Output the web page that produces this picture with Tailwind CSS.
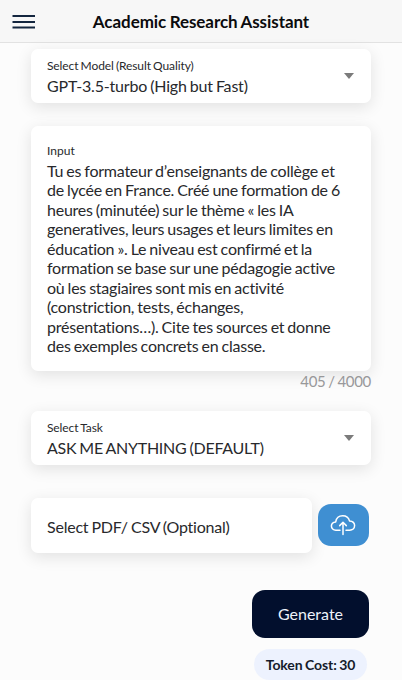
<!DOCTYPE html>
<html lang="en">
<head>
  <meta charset="UTF-8">
  <meta name="viewport" content="width=device-width, initial-scale=1.0">
  <title>Academic Research Assistant</title>
  <script src="https://cdn.jsdelivr.net/npm/@tailwindcss/browser@4"></script>
</head>
<body class="bg-[#fcfcfc] h-screen overflow-hidden font-[Lato,sans-serif] text-[#28292c] [font-variant-ligatures:none]">
  <header class="h-[43px] bg-[#f7f7f7] border-b border-[#e2e2e2] grid grid-cols-[80px_1fr_80px] items-center">
    <button type="button" aria-label="Menu" class="pl-[12px]">
      <svg class="block w-6 h-4" viewBox="0 0 24 16" fill="none" stroke="#14263f" stroke-width="2">
        <path d="M.5 3h22.5M.5 9h22.5M.5 14.600h22.5" />
      </svg>
    </button>
    <h1 class="text-center font-bold text-[17px] leading-5 pt-[2px] text-[#0b0b0d] whitespace-nowrap tracking-[-0.07px] [word-spacing:-0.6px]">Academic Research Assistant</h1>
  </header>
  <main class="pl-[31px] pr-[31px] pt-[6px] [word-spacing:-0.8px]">
    <div class="h-[54px] bg-white rounded-[7px] shadow-[0_4px_16px_rgba(0,0,0,0.11)] pl-4 pr-[17px] flex items-center justify-between">
      <div class="pt-px">
        <p class="text-[12px] leading-[18px] tracking-[-0.1px]">Select Model (Result Quality)</p>
        <p class="text-[16px] leading-[22px] tracking-[-0.19px]">GPT-3.5-turbo (High but Fast)</p>
      </div>
      <svg class="w-[10px] h-[6px]" viewBox="0 0 10 6" fill="#7b7b7b"><path d="M0 0h10L5 6z" /></svg>
    </div>
    <div class="mt-[23px] h-[245px] bg-white rounded-[7px] shadow-[0_4px_16px_rgba(0,0,0,0.11)] pl-4 pt-4">
      <p class="text-[12px] leading-[18px]">Input</p>
      <p class="mt-[1px] text-[16px] leading-[19.45px] tracking-[-0.23px] whitespace-nowrap">Tu es formateur d’enseignants de collège et<br>de lycée en France. Créé une formation de 6<br>heures (minutée) sur le thème « les IA<br>generatives, leurs usages et leurs limites en<br>éducation ». Le niveau est confirmé et la<br>formation se base sur une pédagogie active<br>où les stagiaires sont mis en activité<br>(constriction, tests, échanges,<br>présentations…). Cite tes sources et donne<br>des exemples concrets en classe.</p>
    </div>
    <p class="h-10 text-right text-[15px] leading-5 text-[#98989a] tracking-[-0.3px]">405 / 4000</p>
    <div class="h-[54px] bg-white rounded-[7px] shadow-[0_4px_16px_rgba(0,0,0,0.11)] pl-4 pr-[17px] flex items-center justify-between">
      <div class="pt-px">
        <p class="text-[12px] leading-[18px] tracking-[-0.1px]">Select Task</p>
        <p class="text-[16px] leading-[22px] tracking-[-0.26px]">ASK ME ANYTHING (DEFAULT)</p>
      </div>
      <svg class="w-[10px] h-[6px]" viewBox="0 0 10 6" fill="#7b7b7b"><path d="M0 0h10L5 6z" /></svg>
    </div>
    <div class="mt-[33px] flex items-center gap-[6px]">
      <div class="w-[281px] h-[55px] bg-white rounded-[7px] shadow-[0_4px_16px_rgba(0,0,0,0.11)] pl-4 pt-[3px] flex items-center text-[16px] tracking-[-0.22px]">Select PDF/ CSV (Optional)</div>
      <button type="button" aria-label="Upload" class="w-[51px] h-[42px] -mt-px bg-[#3f8fd2] rounded-[13px] flex items-center justify-center">
        <svg class="w-[26px] h-[22px] -mt-px -ml-px" viewBox="0 0 26 22" fill="none" stroke="#fff" stroke-width="1.5" stroke-linecap="round" stroke-linejoin="round">
          <path d="M10 16.200H5.800C3.300 16.200 1.400 14.500 1.400 12.100c0-2.300 1.700-4 4.300-4.200C6.300 4.300 9 1.800 12.700 1.800c3.300 0 6 2 6.800 5.100 3 .2 5.100 2.100 5.100 4.700 0 2.700-2.100 4.600-4.900 4.600H16" />
          <path d="M13 20.500V8.500M9.700 11.600 13 8.300l3.300 3.300" />
        </svg>
      </button>
    </div>
    <div class="mt-[37px] pr-[2px] flex flex-col items-end">
      <button type="button" class="w-[117px] h-[48px] bg-[#020f2d] text-[#eef2fa] rounded-[13px] text-[16px]">Generate</button>
      <div class="mt-[11px] mr-[2px] w-[113px] h-[31px] bg-[#edf2fe] rounded-full flex items-center justify-center text-[14px] font-bold text-[#151b2b] tracking-[-0.1px]">Token Cost: 30</div>
    </div>
  </main>
</body>
</html>
